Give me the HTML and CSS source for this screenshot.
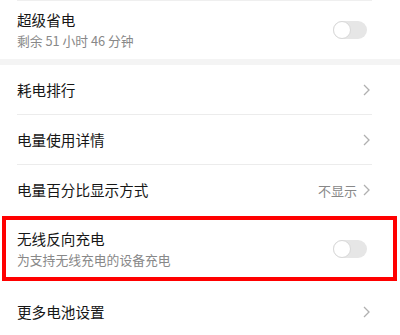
FILE: index.html
```html
<!DOCTYPE html>
<html lang="zh-CN">
<head>
<meta charset="utf-8">
<link rel="stylesheet" href="styles.css">
</head>
<body>
<div class="page">
  <div class="topline"></div>
  <div class="row two">
    <div class="texts">
      <div class="title">超级省电</div>
      <div class="sub">剩余 51 小时 46 分钟</div>
    </div>
    <div class="toggle"><div class="knob"></div></div>
  </div>
  <div class="band"></div>
  <div class="row nav line">
    <div class="title">耗电排行</div>
    <svg class="chev" width="7" height="12" viewBox="0 0 7 12"><polyline points="1,1 6,6 1,11" fill="none" stroke="#b0b0b0" stroke-width="1.3"/></svg>
  </div>
  <div class="row nav line">
    <div class="title">电量使用详情</div>
    <svg class="chev" width="7" height="12" viewBox="0 0 7 12"><polyline points="1,1 6,6 1,11" fill="none" stroke="#b0b0b0" stroke-width="1.3"/></svg>
  </div>
  <div class="row nav">
    <div class="title">电量百分比显示方式</div>
    <div class="right"><span class="value">不显示</span><svg class="chev" width="7" height="12" viewBox="0 0 7 12"><polyline points="1,1 6,6 1,11" fill="none" stroke="#b0b0b0" stroke-width="1.3"/></svg></div>
  </div>
  <div class="highlight">
    <div class="row two boxed">
      <div class="texts">
        <div class="title">无线反向充电</div>
        <div class="sub">为支持无线充电的设备充电</div>
      </div>
      <div class="toggle"><div class="knob"></div></div>
    </div>
  </div>
  <div class="row nav last">
    <div class="title">更多电池设置</div>
    <svg class="chev" width="7" height="12" viewBox="0 0 7 12"><polyline points="1,1 6,6 1,11" fill="none" stroke="#b0b0b0" stroke-width="1.3"/></svg>
  </div>
</div>
</body>
</html>
```
FILE: styles.css
```css
* { box-sizing: border-box; }
html, body { margin: 0; padding: 0; background: #fff; }
body {
  font-family: "Noto Sans CJK SC", "Noto Sans", sans-serif;
  width: 400px;
  height: 335px;
  overflow: hidden;
}
.page { display: flex; flex-direction: column; }
.topline { height: 1px; margin: 0 28px 0 17px; background: #efefef; }
.row {
  display: flex;
  align-items: center;
  justify-content: space-between;
  margin: 0 28px 0 17px;
}
.row.two { height: 58px; }
.row.nav { height: 50px; }
.row.line { border-bottom: 1px solid #ececec; }
.title { font-size: 14.6px; color: #161616; line-height: 18px; }
.sub { font-size: 12.8px; color: #888888; line-height: 16px; margin-top: 4px; }
.texts { display: flex; flex-direction: column; }
.band { height: 6px; background: #f4f4f4; }
.chev { margin-right: 2px; display: block; }
.right { display: flex; align-items: center; gap: 6px; }
.value { font-size: 13px; color: #888888; }
.toggle {
  width: 34px;
  height: 18px;
  border-radius: 9px;
  background: #e6e6e6;
  display: flex;
  align-items: center;
  margin-right: 5px;
}
.knob {
  width: 18px;
  height: 18px;
  border-radius: 50%;
  background: #fff;
  border: 1px solid #d8d8d8;
}
.highlight {
  margin: 1px 3px 0 2px;
  border: 4px solid #ff0000;
  height: 65px;
  display: flex;
}
.boxed { flex: 1; margin: 0 21px 0 11px; height: auto; }
.row.last { margin-top: 6px; }
```
